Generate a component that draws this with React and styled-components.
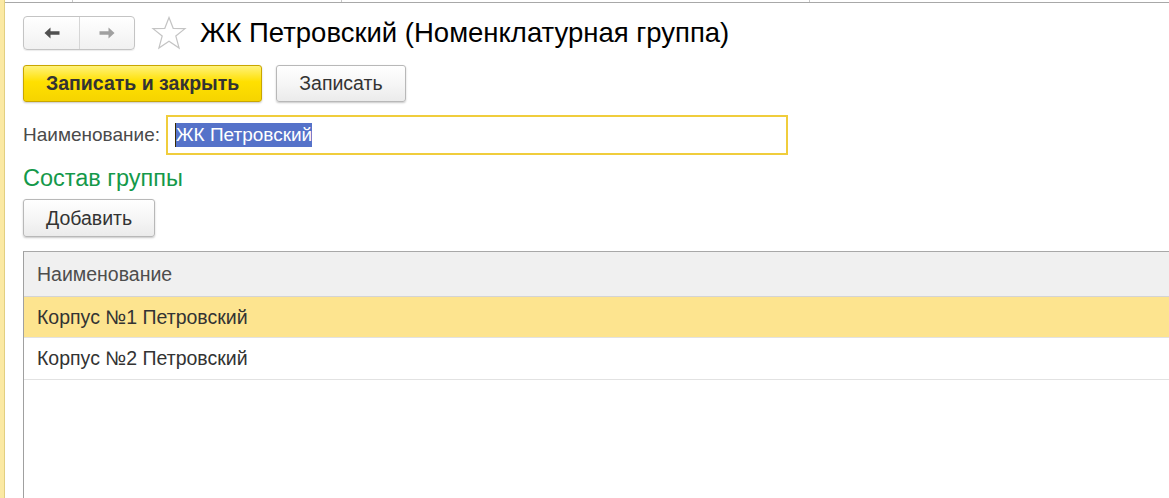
import React from 'react'
import styled, { createGlobalStyle } from 'styled-components'

const GlobalStyle = createGlobalStyle`
  html, body {
    margin: 0;
    padding: 0;
    background: #ffffff;
    font-family: 'Liberation Sans', Arial, sans-serif;
    color: #333333;
  }
  #root {
    height: 498px;
    overflow: hidden;
  }
`

const Window = styled.div`
  display: flex;
  height: 498px;
  background: #ffffff;
`

const SideStrip = styled.div`
  width: 4px;
  flex: none;
  background: #fbe9a3;
  border-right: 1px solid #e2cf80;
`

const Main = styled.div`
  flex: 1;
  min-width: 0;
  display: flex;
  flex-direction: column;
`

const TabEdge = styled.div`
  height: 2px;
  flex: none;
  border-bottom: 1px solid #a8a8a8;
  display: flex;
`

const TabSlot = styled.div`
  width: ${p => p.$w}px;
  flex: none;
  border-right: 1px solid #c8c8c8;
`

const Form = styled.div`
  flex: 1;
  display: flex;
  flex-direction: column;
  padding: 13px 0 0 18px;
`

const HeaderRow = styled.div`
  display: flex;
  align-items: center;
  height: 34px;
`

const NavGroup = styled.div`
  display: flex;
  height: 34px;
  border: 1px solid #c4c4c4;
  border-radius: 4px;
  background: linear-gradient(#ffffff, #f1f1f1);
  box-shadow: 0 1px 1px rgba(0, 0, 0, 0.08);
  box-sizing: border-box;
`

const NavButton = styled.div`
  width: ${p => p.$w}px;
  display: flex;
  align-items: center;
  justify-content: center;
  & + & {
    border-left: 1px solid #d6d6d6;
  }
`

const StarBox = styled.div`
  margin-left: 16px;
  width: 36px;
  height: 34px;
  display: flex;
  align-items: center;
  justify-content: center;
`

const Title = styled.h1`
  margin: 0 0 0 13px;
  font-size: 27.5px;
  font-weight: normal;
  color: #000000;
  line-height: 34px;
  white-space: nowrap;
`

const ButtonRow = styled.div`
  display: flex;
  gap: 14px;
  margin-top: 15px;
`

const Button = styled.button`
  height: ${p => p.$h || 37}px;
  padding: 0 ${p => p.$pad}px;
  box-sizing: border-box;
  font-family: 'Liberation Sans', Arial, sans-serif;
  font-size: 19.5px;
  font-weight: ${p => (p.$primary ? 'bold' : 'normal')};
  color: #333333;
  border-radius: 3px;
  border: 1px solid ${p => (p.$primary ? '#c9a600' : '#b8b8b8')};
  background: ${p =>
    p.$primary
      ? 'linear-gradient(#fff27a, #ffe000 45%, #f5d400)'
      : 'linear-gradient(#ffffff, #f6f6f6 50%, #ebebeb)'};
  box-shadow: 0 1px 2px rgba(0, 0, 0, 0.22);
  cursor: pointer;
`

const FieldRow = styled.div`
  display: flex;
  align-items: center;
  margin-top: 13px;
`

const Label = styled.label`
  font-size: 19px;
  color: #4a4a4a;
  width: 143px;
  flex: none;
  white-space: nowrap;
`

const Input = styled.div`
  width: 622px;
  height: 40px;
  box-sizing: border-box;
  border: 2px solid #f0cd3c;
  display: flex;
  align-items: center;
  padding-left: 7px;
`

const Selected = styled.span`
  font-size: 19px;
  background: #5572c9;
  color: #ffffff;
  line-height: 24px;
  border-left: 1px solid #3a2a00;
`

const GroupTitle = styled.div`
  margin-top: 9px;
  font-size: 23.5px;
  color: #14994a;
  line-height: 28px;
`

const AddRow = styled.div`
  display: flex;
  margin-top: 7px;
`

const Table = styled.div`
  margin-top: 14px;
  flex: 1;
  border-top: 1px solid #a8a8a8;
  border-left: 1px solid #a0a0a0;
  display: flex;
  flex-direction: column;
`

const Cell = styled.div`
  height: ${p => p.$h}px;
  display: flex;
  align-items: center;
  padding-left: 13px;
  font-size: 19.5px;
  color: ${p => (p.$head ? '#4d4d4d' : '#333333')};
  background: ${p => (p.$head ? '#f0f0f0' : p.$current ? '#fde48f' : '#ffffff')};
  border-bottom: 1px solid ${p => (p.$head ? '#d4d4d4' : '#e2e2e2')};
  box-sizing: border-box;
  white-space: nowrap;
`

const Arrow = ({ dir, color }) => (
  <svg width="16" height="12" viewBox="0 0 16 12">
    <g transform={dir === 'right' ? 'matrix(-1 0 0 1 16 0)' : undefined} fill={color}>
      <path d="M0.5 6 L6.5 0.5 L6.5 4.2 L15.5 4.2 L15.5 7.8 L6.5 7.8 L6.5 11.5 Z" />
    </g>
  </svg>
)

const Star = () => (
  <svg width="36" height="34" viewBox="0 0 36 34">
    <path
      d="M18 1.5 L22.2 12.3 L34 12.6 L24.8 20 L28.1 32 L18 25.2 L7.9 32 L11.2 20 L2 12.6 L13.8 12.3 Z"
      fill="#ffffff"
      stroke="#c4c4c4"
      strokeWidth="1.2"
      strokeLinejoin="miter"
    />
  </svg>
)

const rows = ['Корпус №1 Петровский', 'Корпус №2 Петровский']

export default function App() {
  return (
    <>
      <GlobalStyle />
      <Window>
        <SideStrip />
        <Main>
          <TabEdge>
            <TabSlot $w={67} />
            <TabSlot $w={268} />
            <TabSlot $w={467} />
          </TabEdge>
          <Form>
            <HeaderRow>
              <NavGroup>
                <NavButton $w={55}><Arrow dir="left" color="#505050" /></NavButton>
                <NavButton $w={54}><Arrow dir="right" color="#a0a0a0" /></NavButton>
              </NavGroup>
              <StarBox><Star /></StarBox>
              <Title>ЖК Петровский (Номенклатурная группа)</Title>
            </HeaderRow>

            <ButtonRow>
              <Button $primary $pad={22}>Записать и закрыть</Button>
              <Button $pad={22}>Записать</Button>
            </ButtonRow>

            <FieldRow>
              <Label>Наименование:</Label>
              <Input><Selected>ЖК Петровский</Selected></Input>
            </FieldRow>

            <GroupTitle>Состав группы</GroupTitle>
            <AddRow>
              <Button $pad={22} $h={38}>Добавить</Button>
            </AddRow>

            <Table>
              <Cell $head $h={45}>Наименование</Cell>
              {rows.map((r, i) => (
                <Cell key={r} $h={i === 0 ? 41 : 42} $current={i === 0}>{r}</Cell>
              ))}
            </Table>
          </Form>
        </Main>
      </Window>
    </>
  )
}
